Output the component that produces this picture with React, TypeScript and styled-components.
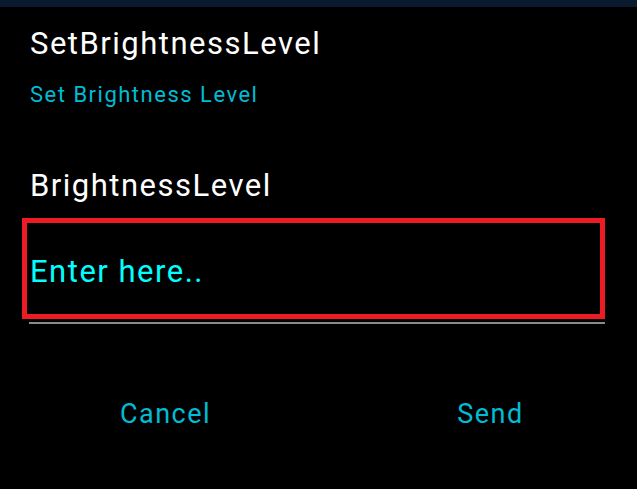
import React from "react";
import styled, { createGlobalStyle } from "styled-components";

const Global = createGlobalStyle`
  html, body { margin: 0; padding: 0; background: #000; }
  body { font-family: Roboto, "Noto Sans", sans-serif; }
`;

const Screen = styled.div`
  width: 637px;
  height: 489px;
  background: #000;
  display: flex;
  flex-direction: column;
  overflow: hidden;
  font-weight: 400;
  letter-spacing: 1.5px;
`;

const StatusStrip = styled.div`
  height: 7px;
  background: #0b1b2f;
`;

const Content = styled.div`
  display: flex;
  flex-direction: column;
  padding: 0 32px 0 30px;
`;

const Title = styled.div`
  color: #fff;
  font-size: 31px;
  line-height: 38px;
  margin-top: 18px;
`;

const Subtitle = styled.div`
  color: #00bcd4;
  font-size: 22px;
  line-height: 28px;
  margin-top: 18px;
`;

const Label = styled.div`
  color: #fff;
  font-size: 31px;
  line-height: 38px;
  margin-top: 58px;
`;

const InputBox = styled.div`
  margin: 13px 0 0 -8px;
  height: 101px;
  box-sizing: border-box;
  border: 5px solid #ed1c24;
  display: flex;
  align-items: center;
  padding: 6px 0 0 3px;
`;

const Placeholder = styled.span`
  color: #00ffff;
  font-size: 31px;
  line-height: 38px;
`;

const Underline = styled.div`
  height: 2px;
  background: #8a8a8a;
  margin: 3px 0 0 -1px;
`;

const Actions = styled.div`
  display: grid;
  grid-template-columns: 325px 325px;
  padding-left: 3px;
  margin-top: 73px;
`;

const ActionButton = styled.button`
  background: none;
  border: none;
  padding: 0;
  color: #00bcd4;
  font-family: Roboto, "Noto Sans", sans-serif;
  font-weight: 400;
  letter-spacing: 1.5px;
  font-size: 27px;
  line-height: 34px;
  text-align: center;
`;

export default function App() {
  return (
    <>
      <Global />
      <Screen>
        <StatusStrip />
        <Content>
          <Title>SetBrightnessLevel</Title>
          <Subtitle>Set Brightness Level</Subtitle>
          <Label>BrightnessLevel</Label>
          <InputBox>
            <Placeholder>Enter here..</Placeholder>
          </InputBox>
          <Underline />
        </Content>
        <Actions>
          <ActionButton>Cancel</ActionButton>
          <ActionButton>Send</ActionButton>
        </Actions>
      </Screen>
    </>
  );
}
